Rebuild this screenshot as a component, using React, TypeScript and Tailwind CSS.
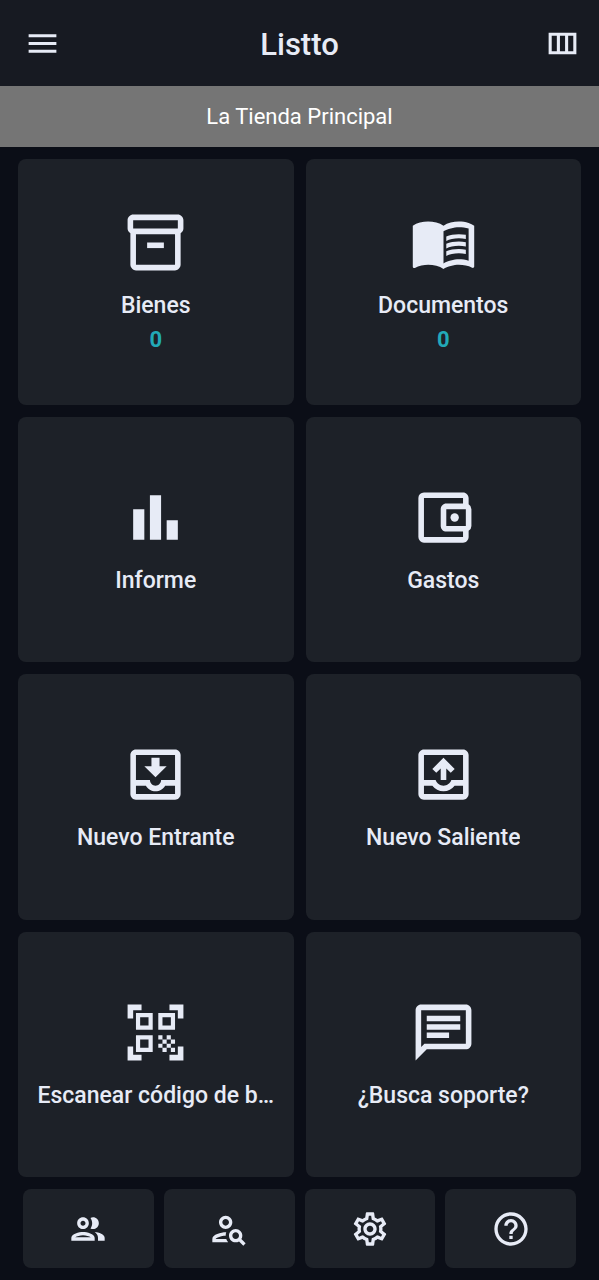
import type { ComponentType } from "react";
import {
  MdBarChart,
  MdHelpOutline,
  MdMenu,
  MdMenuBook,
  MdOutlineAccountBalanceWallet,
  MdOutlineChat,
  MdOutlineInventory2,
  MdOutlineMoveToInbox,
  MdOutlineOutbox,
  MdOutlinePersonSearch,
  MdOutlineSettings,
  MdOutlineViewColumn,
  MdQrCodeScanner,
} from "react-icons/md";

type Icon = ComponentType<{ size?: number }>;
type Tile = { label: string; icon: Icon; count?: number };

function PeopleIcon({ size = 24 }: { size?: number }) {
  return (
    <svg width={size} height={size} viewBox="0 0 24 24" fill="currentColor" aria-hidden="true">
      <path d="M9 13.75c-2.34 0-7 1.17-7 3.5V19h14v-1.75c0-2.33-4.66-3.5-7-3.5zM4.34 17c.84-.58 2.87-1.25 4.66-1.25s3.82.67 4.66 1.25H4.34zM9 12c1.93 0 3.5-1.57 3.5-3.5S10.93 5 9 5 5.5 6.57 5.5 8.5 7.07 12 9 12zm0-5c.83 0 1.5.67 1.5 1.5S9.83 10 9 10s-1.5-.67-1.5-1.5S8.17 7 9 7zm7.04 6.81c1.16.84 1.96 1.96 1.96 3.44V19h4v-1.75c0-2.02-3.5-3.17-5.96-3.44zM15 12c1.93 0 3.5-1.57 3.5-3.5S16.93 5 15 5c-.54 0-1.04.13-1.5.35.63.89 1 1.98 1 3.15s-.37 2.26-1 3.15c.46.22.96.35 1.5.35z" />
    </svg>
  );
}

const tiles: Tile[] = [
  { label: "Bienes", icon: MdOutlineInventory2, count: 0 },
  { label: "Documentos", icon: MdMenuBook, count: 0 },
  { label: "Informe", icon: MdBarChart },
  { label: "Gastos", icon: MdOutlineAccountBalanceWallet },
  { label: "Nuevo Entrante", icon: MdOutlineMoveToInbox },
  { label: "Nuevo Saliente", icon: MdOutlineOutbox },
  { label: "Escanear código de b…", icon: MdQrCodeScanner },
  { label: "¿Busca soporte?", icon: MdOutlineChat },
];

const shortcuts: Tile[] = [
  { label: "Clientes", icon: PeopleIcon },
  { label: "Buscar persona", icon: MdOutlinePersonSearch },
  { label: "Ajustes", icon: MdOutlineSettings },
  { label: "Ayuda", icon: MdHelpOutline },
];

function TileButton({ label, icon: Icon, count }: Tile) {
  return (
    <button
      type="button"
      className="flex min-w-0 flex-col items-center justify-center rounded-lg bg-[#1d2128] px-4 py-6"
    >
      <Icon size={67} />
      <span className="mt-4 max-w-full truncate text-[23px] leading-[28px] font-medium">
        {label}
      </span>
      {count !== undefined && (
        <span className="mt-1.5 text-[22px] leading-[28px] font-bold text-[#22a9b8]">{count}</span>
      )}
    </button>
  );
}

export default function App() {
  return (
    <div className="flex min-h-screen flex-col bg-[#0b0e17] font-['Roboto',sans-serif] text-[#e7ebf6]">
      <header className="grid h-[86px] grid-cols-[1fr_auto_1fr] items-center bg-[#171a22] pr-[18px] pl-6">
        <button type="button" aria-label="Menú" className="justify-self-start">
          <MdMenu size={37} />
        </button>
        <h1 className="pt-1 pr-1.5 text-[31px] leading-10 font-medium">Listto</h1>
        <button type="button" aria-label="Columnas" className="justify-self-end">
          <MdOutlineViewColumn size={37} />
        </button>
      </header>
      <p className="bg-[#757575] py-4 text-center text-[22px] leading-[29px] text-white">
        La Tienda Principal
      </p>
      <main className="grid flex-1 auto-rows-fr grid-cols-2 gap-3 px-[18px] py-3">
        {tiles.map((tile) => (
          <TileButton key={tile.label} {...tile} />
        ))}
      </main>
      <nav className="grid grid-cols-4 gap-2.5 px-[23px] pb-3">
        {shortcuts.map(({ label, icon: Icon }) => (
          <button
            key={label}
            type="button"
            aria-label={label}
            className="flex h-[79px] items-center justify-center rounded-lg bg-[#1d2128]"
          >
            <Icon size={40} />
          </button>
        ))}
      </nav>
    </div>
  );
}
